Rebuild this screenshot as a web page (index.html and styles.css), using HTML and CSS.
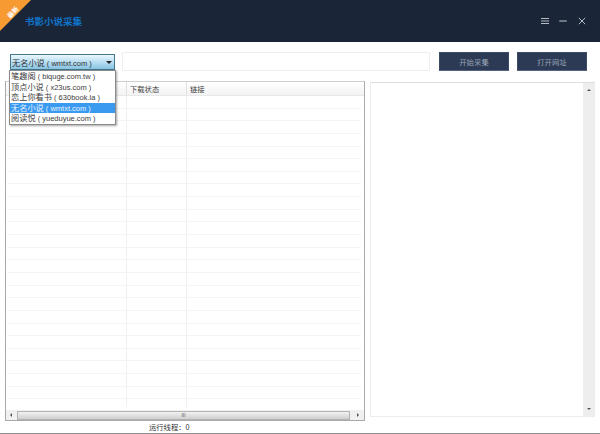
FILE: index.html
```html
<!DOCTYPE html>
<html lang="zh">
<head>
<meta charset="utf-8">
<title>书影小说采集</title>
<link rel="stylesheet" href="styles.css">
</head>
<body>
<div class="app">
  <header class="titlebar">
    <div class="ribbon"><span>最新</span></div>
    <h1 class="title">书影小说采集</h1>
    <div class="winbtns">
      <svg class="ico" viewBox="0 0 12 12"><path d="M2 3.5h8M2 6h8M2 8.5h8" stroke="#b4bac4" stroke-width="1" fill="none"/></svg>
      <svg class="ico" viewBox="0 0 12 12"><path d="M2.2 6h7.6" stroke="#b4bac4" stroke-width="1.1" fill="none"/></svg>
      <svg class="ico" viewBox="0 0 12 12"><path d="M2.8 2.8l6.4 6.4M9.2 2.8l-6.4 6.4" stroke="#b4bac4" stroke-width="1" fill="none"/></svg>
    </div>
  </header>

  <div class="toolbar">
    <div class="select">
      <span>无名小说<span class="en"> ( wmtxt.com )</span></span>
      <i class="caret"></i>
    </div>
    <div class="urlbox"></div>
    <button class="btn">开始采集</button>
    <button class="btn btn2">打开网址</button>
    <ul class="menu">
      <li>笔趣阁<span class="en"> ( biquge.com.tw )</span></li>
      <li>顶点小说<span class="en"> ( x23us.com )</span></li>
      <li>恋上你看书<span class="en"> ( 630book.la )</span></li>
      <li class="sel">无名小说<span class="en"> ( wmtxt.com )</span></li>
      <li>阅读悦<span class="en"> ( yueduyue.com )</span></li>
    </ul>
  </div>

  <div class="panes">
    <div class="listwrap">
      <div class="list">
        <div class="thead">
          <div class="c1"></div>
          <div class="c2">下载状态</div>
          <div class="c3">链接</div>
        </div>
        <div class="tbody">
          <div class="row"><div class="c1"></div><div class="c2"></div><div class="c3"></div></div>
          <div class="row"><div class="c1"></div><div class="c2"></div><div class="c3"></div></div>
          <div class="row"><div class="c1"></div><div class="c2"></div><div class="c3"></div></div>
          <div class="row"><div class="c1"></div><div class="c2"></div><div class="c3"></div></div>
          <div class="row"><div class="c1"></div><div class="c2"></div><div class="c3"></div></div>
          <div class="row"><div class="c1"></div><div class="c2"></div><div class="c3"></div></div>
          <div class="row"><div class="c1"></div><div class="c2"></div><div class="c3"></div></div>
          <div class="row"><div class="c1"></div><div class="c2"></div><div class="c3"></div></div>
          <div class="row"><div class="c1"></div><div class="c2"></div><div class="c3"></div></div>
          <div class="row"><div class="c1"></div><div class="c2"></div><div class="c3"></div></div>
          <div class="row"><div class="c1"></div><div class="c2"></div><div class="c3"></div></div>
          <div class="row"><div class="c1"></div><div class="c2"></div><div class="c3"></div></div>
          <div class="row"><div class="c1"></div><div class="c2"></div><div class="c3"></div></div>
          <div class="row"><div class="c1"></div><div class="c2"></div><div class="c3"></div></div>
          <div class="row"><div class="c1"></div><div class="c2"></div><div class="c3"></div></div>
          <div class="row"><div class="c1"></div><div class="c2"></div><div class="c3"></div></div>
          <div class="row"><div class="c1"></div><div class="c2"></div><div class="c3"></div></div>
          <div class="row"><div class="c1"></div><div class="c2"></div><div class="c3"></div></div>
          <div class="row"><div class="c1"></div><div class="c2"></div><div class="c3"></div></div>
          <div class="row"><div class="c1"></div><div class="c2"></div><div class="c3"></div></div>
          <div class="row"><div class="c1"></div><div class="c2"></div><div class="c3"></div></div>
          <div class="row"><div class="c1"></div><div class="c2"></div><div class="c3"></div></div>
          <div class="row"><div class="c1"></div><div class="c2"></div><div class="c3"></div></div>
          <div class="row"><div class="c1"></div><div class="c2"></div><div class="c3"></div></div>
          <div class="row last"><div class="c1"></div><div class="c2"></div><div class="c3"></div></div>
        </div>
        <div class="hscroll">
          <i class="arrow left"></i>
          <div class="thumb"><span>III</span></div>
          <i class="arrow right"></i>
        </div>
      </div>
      <div class="status">运行线程：0</div>
    </div>
    <div class="log">
      <div class="vscroll">
        <i class="arrow up"></i>
        <i class="arrow down"></i>
      </div>
    </div>
  </div>
  <div class="bottomline"></div>
</div>
</body>
</html>
```
FILE: styles.css
```css
* { box-sizing: border-box; }
html, body { margin: 0; padding: 0; }
body { width: 600px; height: 434px; overflow: hidden; background: #fff; font-family: "Noto Sans CJK SC", "Liberation Sans", sans-serif; font-size: 7.3px; color: #444; }
.app { position: relative; width: 600px; height: 434px; display: flex; flex-direction: column; }

.titlebar { flex: none; height: 42px; background: #1b2538; display: flex; align-items: center; padding: 0 12.5px 0 25px; position: relative; overflow: hidden; }
.ribbon { position: absolute; left: 0; top: 0; width: 31px; height: 31px; padding: 0 7px 8px 0; background: #f79a32; clip-path: polygon(0 0, 100% 0, 0 100%); display: flex; align-items: center; justify-content: center; }
.ribbon span { color: #fff; font-size: 6.5px; font-weight: 700; line-height: 8px; white-space: nowrap; transform: rotate(-45deg); }
.title { margin: 0; font-size: 9.5px; font-weight: 700; color: #0f74c8; }
.winbtns { margin-left: auto; display: flex; gap: 6.5px; align-items: center; }
.ico { width: 12px; height: 12px; display: block; }

.en { font-family: "Liberation Sans", sans-serif; font-size: 7.5px; }

.toolbar { flex: none; position: relative; display: flex; align-items: flex-start; height: 39px; padding: 10px 0 0 10px; }
.select { width: 105px; height: 16px; margin-top: 2px; border: 1px solid #44778c; background: linear-gradient(#eaf6fc, #b4dcf1 55%, #86c3e2); display: flex; align-items: center; justify-content: space-between; padding: 0 2px 0 1px; color: #333; font-size: 8.2px; white-space: nowrap; }
.caret { width: 0; height: 0; border: 3px solid transparent; border-top: 3px solid #222; border-bottom: 0; }
.urlbox { width: 308px; height: 19px; margin-left: 7px; border: 1px solid #eeeeee; background: #fff; }
.btn { width: 70px; height: 19px; margin-left: 9px; padding: 0; border: 1px solid #3d4c66; border-bottom-color: #56657f; background: #2c3a55; color: #98a2b3; font: inherit; font-size: 7.4px; }
.btn2 { margin-left: 8px; }
.menu { list-style: none; margin: 0; padding: 0; position: absolute; left: 9px; top: 28px; width: 107px; background: #fff; border: 1px solid #8a8a8a; box-shadow: 1px 1px 2px rgba(0,0,0,.35); z-index: 5; font-size: 8.2px; }
.menu li { height: 10.5px; line-height: 9.5px; padding-left: 1px; white-space: nowrap; color: #3c3c3c; }
.menu li.sel { background: #3a9af0; color: #e6f3ff; }

.panes { flex: 1; min-height: 0; display: flex; padding-left: 5px; gap: 5px; align-items: flex-start; }
.listwrap { width: 360px; }
.list { height: 340px; border: 1px solid #a9a9a9; border-top-color: #cfcfcf; display: flex; flex-direction: column; background: #fff; }
.thead { flex: none; height: 14px; display: flex; background: linear-gradient(#fff, #f3f3f3); border-bottom: 1px solid #e8e8e8; line-height: 14px; }
.thead .c2, .thead .c3 { padding-left: 3px; border-left: 1px solid #e0e0e0; }
.c1 { width: 120px; flex: none; }
.c2 { width: 60px; flex: none; }
.c3 { flex: 1; }
.tbody { flex: 1; min-height: 0; overflow: hidden; margin: 0 3px 3px 1px; }
.row { height: 12.65px; display: flex; border-bottom: 1px solid #f4f4f4; }
.row.last { border-bottom: 0; }
.row .c2, .row .c3 { border-left: 1px solid #f0f0f0; }
.row .c1 { width: 119px; }
.hscroll { flex: none; height: 10px; display: flex; align-items: center; background: #f0f0f0; }
.arrow { flex: none; display: block; width: 0; height: 0; border: 2px solid transparent; }
.arrow.left { border-right-color: #555; border-left: 0; margin: 0 5px 0 4px; }
.arrow.right { border-left-color: #555; border-right: 0; margin: 0 5px 0 7px; }
.thumb { flex: 1; height: 9px; border: 1px solid #b4b4b4; background: linear-gradient(#f2f2f2, #cfcfcf); display: flex; align-items: center; justify-content: center; font-family: "Liberation Sans", sans-serif; font-size: 5px; color: #555; line-height: 7px; }
.status { height: 12px; line-height: 12px; padding-left: 144px; color: #333; }

.log { width: 225px; height: 335px; margin-top: 1px; border: 1px solid #ececec; border-top-color: #dedede; display: flex; justify-content: flex-end; background: #fff; }
.vscroll { width: 11px; background: #eeeeee; display: flex; flex-direction: column; justify-content: space-between; align-items: center; padding: 6px 0; }
.arrow.up { border-bottom-color: #555; border-top: 0; }
.arrow.down { border-top-color: #555; border-bottom: 0; }

.bottomline { flex: none; height: 1px; background: #8f8f8f; }
```
